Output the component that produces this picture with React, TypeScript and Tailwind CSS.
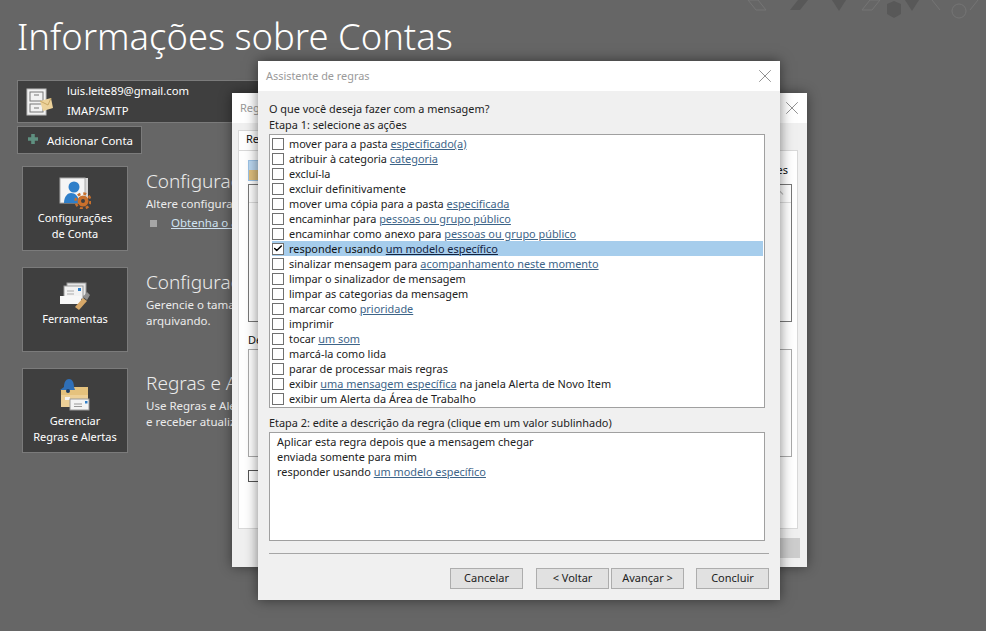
import React from "react";
import { Check, X, ChevronUp } from "lucide-react";

// Page font, Segoe UI is not around so Noto Sans stands in
const FONT = "font-['Noto_Sans','Open_Sans',sans-serif]";

type Action = { text: string; link?: string; after?: string; checked?: boolean };

const actions: Action[] = [
  { text: "mover para a pasta ", link: "especificado(a)" },
  { text: "atribuir à categoria ", link: "categoria" },
  { text: "excluí-la" },
  { text: "excluir definitivamente" },
  { text: "mover uma cópia para a pasta ", link: "especificada" },
  { text: "encaminhar para ", link: "pessoas ou grupo público" },
  { text: "encaminhar como anexo para ", link: "pessoas ou grupo público" },
  { text: "responder usando ", link: "um modelo específico", checked: true },
  { text: "sinalizar mensagem para ", link: "acompanhamento neste momento" },
  { text: "limpar o sinalizador de mensagem" },
  { text: "limpar as categorias da mensagem" },
  { text: "marcar como ", link: "prioridade" },
  { text: "imprimir" },
  { text: "tocar ", link: "um som" },
  { text: "marcá-la como lida" },
  { text: "parar de processar mais regras" },
  { text: "exibir ", link: "uma mensagem específica", after: " na janela Alerta de Novo Item" },
  { text: "exibir um Alerta da Área de Trabalho" },
];

const AccountIcon = () => (
  <svg width="28" height="28" viewBox="0 0 28 28">
    <rect x="1" y="1" width="19" height="26" fill="#f2f2f2" stroke="#bdbdbd" />
    <rect x="4" y="4" width="13" height="9" fill="none" stroke="#777" />
    <rect x="4" y="16" width="13" height="8" fill="none" stroke="#777" />
    <path d="M8 7h5M8 20h5" stroke="#777" />
    <path d="M14 13l11-3 2 10-10 3z" fill="#ecd29a" />
    <path d="M14 13l8 4 3-7" fill="none" stroke="#c9a866" />
  </svg>
);

const SettingsIcon = () => (
  <svg width="32" height="32" viewBox="0 0 32 32">
    <rect x="3" y="1" width="26" height="25" fill="#d9d9d9" />
    <rect x="1" y="1" width="25" height="25" fill="#f5f5f5" stroke="#aaa" />
    <circle cx="15" cy="10" r="5.5" fill="#2f7fc9" />
    <path d="M5 26c0-7 4-10 7-10 4 0 8 3 8 10z" fill="#2f7fc9" />
    <circle cx="24" cy="24" r="5.5" fill="#c9702c" />
    <circle cx="24" cy="24" r="7.5" fill="none" stroke="#c9702c" strokeWidth="2.5" strokeDasharray="3 2.9" />
    <circle cx="24" cy="24" r="2" fill="#3f3f3f" />
  </svg>
);

const ToolsIcon = () => (
  <svg width="32" height="28" viewBox="0 0 32 28">
    <rect x="8" y="1" width="19" height="13" fill="#e6e6e6" stroke="#999" />
    <rect x="5" y="4" width="19" height="13" fill="#f2f2f2" stroke="#999" />
    <rect x="19" y="6" width="3" height="3" fill="#2f7fc9" />
    <path d="M8 9h7M8 12h7" stroke="#aaa" />
    <rect x="1" y="14" width="21" height="8" fill="#f7f7f7" />
    <path d="M16 25l8-9 4 3-8 9z" fill="#d7a868" />
    <path d="M24 15l4-5 3 3-3 5z" fill="#8f8f8f" />
  </svg>
);

const RulesIcon = () => (
  <svg width="32" height="34" viewBox="0 0 32 34">
    <path d="M2 12h10l3-3h14v20H2z" fill="#e5c27d" />
    <path d="M2 17h27v12H2z" fill="#edd097" />
    <path d="M5 9c0-5 2-8 5-8s5 3 5 8l1 3H1z" fill="#2f6fb7" />
    <circle cx="9" cy="13" r="2" fill="#1f3f66" />
    <rect x="6" y="19" width="5" height="3" fill="#f5f5f5" />
    <rect x="11" y="21" width="19" height="11" fill="#f4f4f4" stroke="#999" />
    <rect x="26" y="23" width="2.5" height="2.5" fill="#2f7fc9" />
    <path d="M15 26h8M15 28.5h8" stroke="#999" />
  </svg>
);

const PlusIcon = () => (
  <svg width="10" height="10" viewBox="0 0 10 10" className="mb-[3px]">
    <path d="M3.2 0h3.6v3.2H10v3.6H6.8V10H3.2V6.8H0V3.2h3.2z" fill="#5f9080" />
  </svg>
);

const ActionLabel = ({ item }: { item: Action }) => (
  <span className="whitespace-nowrap">
    {item.text}
    {item.link && (
      <span className={`underline ${item.checked ? "text-[#14233f]" : "text-[#3d6488]"}`}>{item.link}</span>
    )}
    {item.after}
  </span>
);

const DarkCard = ({ icon, lines, iconBox }: { icon: React.ReactNode; lines: string[]; iconBox: string }) => (
  <div className={`w-[106px] h-[85px] shrink-0 bg-[#3f3f3f] border border-[#7b7b7b] flex flex-col items-center text-white text-[11px] leading-[16px] ${iconBox}`}>
    {icon}
    <div className="mt-[1px] text-center whitespace-nowrap">
      {lines.map((l) => (
        <div key={l}>{l}</div>
      ))}
    </div>
  </div>
);

// Only the part of these texts that shows beside the dialogs is written out
const Section = ({ title, children }: { title: string; children: React.ReactNode }) => (
  <div className="w-[86px] whitespace-nowrap text-[#ececec] text-[11.5px] leading-[16px] pt-[1px]">
    <div className="text-[19px] font-light leading-[28px] mb-[1px]">{title}</div>
    {children}
  </div>
);

const DialogButton = ({ label, className = "" }: { label: string; className?: string }) => (
  <div className={`w-[73px] h-[21px] bg-[#e1e1e1] border border-[#adadad] flex items-center justify-center text-[11px] text-[#222] ${className}`}>
    {label}
  </div>
);

// The dialog behind the wizard, only its edges stay visible
const RulesDialog = () => (
  <div className="absolute left-[232px] top-[93px] w-[575px] h-[474px] bg-[#f0f0f0] shadow-[0_0_12px_rgba(0,0,0,0.45)] flex flex-col">
    <div className="h-[30px] bg-white flex items-center justify-between pl-[8px] pr-[4px] text-[11px] text-[#999]">
      <span>Reg</span>
      <X size={22} strokeWidth={1} className="text-[#888]" />
    </div>
    <div className="mx-[6px] mt-[7px] h-[20px] w-[70px] bg-white border border-b-0 border-[#d9d9d9] pl-[7px] text-[11px] text-[#111]">
      Re
    </div>
    <div className="mx-[6px] w-[560px] h-[379px] bg-white border border-[#d9d9d9] pl-[9px] pr-[5px] pt-[8px] flex flex-col">
      <div className="h-[22px] flex items-center justify-between text-[11px] text-[#111]">
        <div className="w-[11px] h-[21px] bg-[#bcd9f2] border border-[#9cc3e6] flex items-end">
          <div className="w-full h-[10px] bg-[#e0c07e]" />
        </div>
        <span className="pr-[4px]">es</span>
      </div>
      <div className="mt-[3px] h-[138px] border border-[#777] relative">
        <div className="h-[18px] border-b border-[#ddd]" />
        <ChevronUp size={13} className="absolute right-[5px] top-[1px] text-[#bbb]" />
      </div>
      <div className="mt-[10px] h-[16px] text-[11px] text-[#111]">De</div>
      <div className="mt-[1px] h-[108px] border border-[#aaa]" />
      <div className="mt-[13px] w-[11px] h-[12px] border border-[#555]" />
    </div>
    <div className="self-end mt-[9px] mr-[7px] w-[73px] h-[20px] bg-[#cdcdcd]" />
  </div>
);

const WizardDialog = () => (
  <div className="absolute left-[258px] top-[61px] w-[522px] h-[539px] bg-[#f0f0f0] shadow-[0_0_12px_rgba(0,0,0,0.5)] flex flex-col text-[10.9px] text-[#222]">
    <div className="h-[30px] bg-white flex items-center justify-between pl-[8px] pr-[4px] text-[#9a9a9a]">
      <span>Assistente de regras</span>
      <X size={22} strokeWidth={1} className="text-[#888]" />
    </div>
    <div className="pl-[11px] pr-[11px] pt-[10px] flex flex-col">
      <div className="h-[16px] leading-[16px]">O que você deseja fazer com a mensagem?</div>
      <div className="h-[16px] leading-[16px]">Etapa 1: selecione as ações</div>
      <div className="mt-[1px] mr-[4px] h-[274px] bg-white border border-[#a0a0a0] pl-[2px] pr-[1px] pt-[1px]">
        {actions.map((item) => (
          <div
            key={item.text + (item.link ?? "")}
            className={`h-[15px] flex items-center leading-[15px] ${item.checked ? "bg-[#a6cdec] text-[#111]" : ""}`}
          >
            <div className="w-[12px] h-[12px] mr-[5px] shrink-0 bg-white border border-[#707070] flex items-center justify-center">
              {item.checked && <Check size={11} strokeWidth={3.5} className="text-black" />}
            </div>
            <ActionLabel item={item} />
          </div>
        ))}
      </div>
      <div className="mt-[7px] h-[16px] leading-[16px]">Etapa 2: edite a descrição da regra (clique em um valor sublinhado)</div>
      <div className="mt-[1px] mr-[4px] h-[109px] bg-white border border-[#a0a0a0] pl-[7px] pt-[1px] leading-[15px]">
        <div>Aplicar esta regra depois que a mensagem chegar</div>
        <div>enviada somente para mim</div>
        <div>
          responder usando <span className="underline text-[#3d6488]">um modelo específico</span>
        </div>
      </div>
      <div className="mt-[12px] h-px bg-[#a6a6a6]" />
      <div className="mt-[14px] flex justify-end">
        <DialogButton label="Cancelar" />
        <DialogButton label="< Voltar" className="ml-[13px]" />
        <DialogButton label="Avançar >" className="ml-[2px]" />
        <DialogButton label="Concluir" className="ml-[12px]" />
      </div>
    </div>
  </div>
);

const App: React.FC = () => {
  return (
    <div className={`relative w-[986px] h-[631px] overflow-hidden bg-[#666666] ${FONT}`}>
      {/* Backstage ribbon art, top right */}
      <svg className="absolute right-0 top-0" width="266" height="24" viewBox="0 0 266 24">
        <path d="M28 0l8 10h10L38 0z" fill="none" stroke="#757575" />
        <path d="M70 10L78 0h10l-8 10z" fill="#585858" />
        <path d="M112 0h14l-7 11z" fill="#585858" />
        <path d="M142 10l8-10h10l-8 10z" fill="none" stroke="#757575" />
        <path d="M167 4l7-3 7 3v10l-7 4-7-4z" fill="#585858" />
        <path d="M185 0h14l-7 11z" fill="#585858" />
        <path d="M212 0l8 10M258 0l-8 10" stroke="#757575" />
        <circle cx="239" cy="11" r="7" fill="none" stroke="#757575" />
      </svg>

      <div className="pl-[17px] pt-[10px] flex flex-col items-start">
        <h1 className="text-[36.4px] leading-[52px] font-light text-white whitespace-nowrap">Informações sobre Contas</h1>
        <div className="mt-[18px] w-[300px] h-[43px] bg-[#3f3f3f] border border-[#7b7b7b] flex items-center pl-[8px] text-white text-[11.25px] leading-[20px]">
          <AccountIcon />
          <div className="ml-[13px] mb-[2px]">
            <div>luis.leite89@gmail.com</div>
            <div>IMAP/SMTP</div>
          </div>
        </div>
        <div className="mt-[3px] w-[125px] h-[28px] bg-[#3f3f3f] border border-[#7b7b7b] flex items-center pl-[10px] text-white text-[11.5px]">
          <PlusIcon />
          <span className="ml-[9px] pt-[1px]">Adicionar Conta</span>
        </div>

        <div className="mt-[12px] ml-[5px] flex flex-col gap-[16px]">
          <div className="flex gap-[18px]">
            <DarkCard icon={<SettingsIcon />} lines={["Configurações", "de Conta"]} iconBox="pt-[10px]" />
            <Section title="Configuraç">
              <div>Altere configura</div>
              <div className="flex items-center mt-[3px] pl-[4px]">
                <div className="w-[7px] h-[7px] shrink-0 bg-[#a6a6a6]" />
                <span className="ml-[14px] underline text-[#cfe3f2]">Obtenha o a</span>
              </div>
            </Section>
          </div>
          <div className="flex gap-[18px]">
            <DarkCard icon={<ToolsIcon />} lines={["Ferramentas"]} iconBox="pt-[14px]" />
            <Section title="Configuraç">
              <div>Gerencie o tama</div>
              <div>arquivando.</div>
            </Section>
          </div>
          <div className="flex gap-[18px]">
            <DarkCard icon={<RulesIcon />} lines={["Gerenciar", "Regras e Alertas"]} iconBox="pt-[9px]" />
            <Section title="Regras e A">
              <div>Use Regras e Ale</div>
              <div>e receber atualiz</div>
            </Section>
          </div>
        </div>
      </div>

      <RulesDialog />
      <WizardDialog />
    </div>
  );
};

export default App;
